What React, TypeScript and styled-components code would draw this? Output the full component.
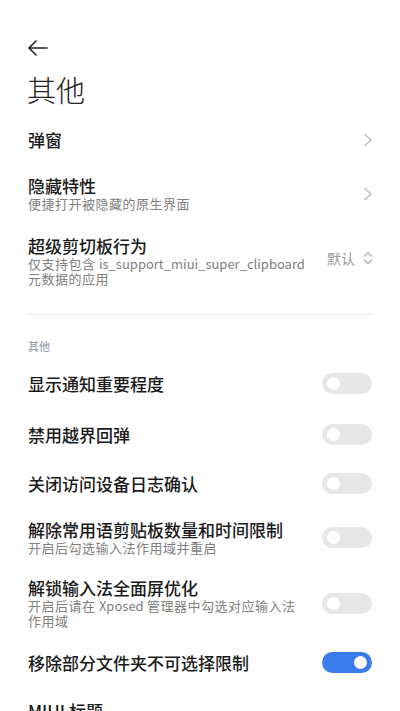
import React from "react";
import styled, { createGlobalStyle } from "styled-components";

const Global = createGlobalStyle`
  html, body { margin: 0; padding: 0; background: #fff; }
  body { font-family: "Noto Sans CJK SC", "Noto Sans", sans-serif; -webkit-font-smoothing: antialiased; }
  * { box-sizing: border-box; }
`;

const Page = styled.div`
  width: 400px;
  height: 711px;
  overflow: hidden;
  background: #fff;
  padding: 0 28px;
`;

const TopBar = styled.div`
  height: 62px;
  padding-top: 37px;
  display: flex;
  align-items: flex-start;
`;

const BackButton = styled.div`
  width: 22px;
  height: 22px;
  margin-left: -1px;
  display: flex;
  align-items: center;
`;

const Title = styled.h1`
  margin: 10px 0 0 -1px;
  font-size: 29px;
  line-height: 34px;
  font-weight: 300;
  color: #222;
`;

const List = styled.div<{ $mt: number }>`
  display: flex;
  flex-direction: column;
  margin-top: ${(p) => p.$mt}px;
`;

const Row = styled.div<{ $pt: number; $pb: number }>`
  display: flex;
  align-items: center;
  gap: 12px;
  flex-shrink: 0;
  padding-top: ${(p) => p.$pt}px;
  padding-bottom: ${(p) => p.$pb}px;
`;

const Texts = styled.div`
  flex: 1;
  min-width: 0;
  display: flex;
  flex-direction: column;
`;

const RowTitle = styled.div`
  font-size: 17px;
  line-height: 20px;
  font-weight: 500;
  color: #1a1a1a;
  white-space: nowrap;
`;

const RowSub = styled.div`
  font-size: 13px;
  line-height: 15px;
  color: #808080;
  letter-spacing: 0.5px;
  white-space: nowrap;
`;

const Latin = styled.span`
  letter-spacing: 0;
`;

const Value = styled.div`
  display: flex;
  align-items: center;
  gap: 8px;
  font-size: 14px;
  line-height: 18px;
  color: #9a9a9a;
  margin-right: -1px;
  margin-bottom: 6px;
`;

const Divider = styled.div`
  height: 1px;
  background: #ececec;
  margin-top: 15px;
`;

const Section = styled.div`
  margin-top: 24px;
  margin-bottom: 5px;
  font-size: 11px;
  line-height: 14px;
  color: #8a8fa6;
`;

const Track = styled.div<{ $on: boolean }>`
  width: 50px;
  height: 21px;
  border-radius: 11px;
  background: ${(p) => (p.$on ? "#3a7cec" : "#e7e7e7")};
  display: flex;
  align-items: center;
  justify-content: ${(p) => (p.$on ? "flex-end" : "flex-start")};
  padding: 0 5px;
  flex-shrink: 0;
`;

const Knob = styled.div`
  width: 13px;
  height: 13px;
  border-radius: 50%;
  background: #fff;
`;

const Chevron = () => (
  <svg width="10" height="16" viewBox="0 0 10 16" style={{ flexShrink: 0, marginRight: -1 }}>
    <path d="M2 2.5 L8 8 L2 13.5" fill="none" stroke="#b8b8b8" strokeWidth="1.3" strokeLinecap="round" strokeLinejoin="round" />
  </svg>
);

const UpDown = () => (
  <svg width="10" height="16" viewBox="0 0 10 16">
    <path d="M1.5 6 L5 2.5 L8.5 6 M1.5 10 L5 13.5 L8.5 10" fill="none" stroke="#b0b0b0" strokeWidth="1.2" strokeLinecap="round" strokeLinejoin="round" />
  </svg>
);

const Toggle = ({ on }: { on: boolean }) => (
  <Track $on={on}>
    <Knob />
  </Track>
);

type Item = { title: string; sub?: React.ReactNode; on?: boolean; pt: number; pb: number };

const toggles: Item[] = [
  { title: "显示通知重要程度", on: false, pt: 15, pb: 15 },
  { title: "禁用越界回弹", on: false, pt: 15, pb: 14 },
  { title: "关闭访问设备日志确认", on: false, pt: 14, pb: 14 },
  { title: "解除常用语剪贴板数量和时间限制", sub: "开启后勾选输入法作用域并重启", on: false, pt: 12, pb: 12 },
  {
    title: "解锁输入法全面屏优化",
    sub: (
      <>
        开启后请在 <Latin>Xposed</Latin> 管理器中勾选对应输入法
        <br />
        作用域
      </>
    ),
    on: false,
    pt: 11,
    pb: 12,
  },
  { title: "移除部分文件夹不可选择限制", on: true, pt: 12, pb: 15 },
  { title: "MIUI 标题", pt: 13, pb: 15 },
];

export default function App() {
  return (
    <Page>
      <Global />
      <TopBar>
        <BackButton>
          <svg width="22" height="22" viewBox="0 0 22 22">
            <path d="M2 11 H20 M9 4 L2 11 L9 18" fill="none" stroke="#222" strokeWidth="1.6" strokeLinecap="round" strokeLinejoin="round" />
          </svg>
        </BackButton>
      </TopBar>
      <Title>其他</Title>
      <List $mt={11}>
        <Row $pt={13} $pb={13}>
          <Texts>
            <RowTitle>弹窗</RowTitle>
          </Texts>
          <Chevron />
        </Row>
        <Row $pt={13} $pb={12}>
          <Texts>
            <RowTitle>隐藏特性</RowTitle>
            <RowSub>便捷打开被隐藏的原生界面</RowSub>
          </Texts>
          <Chevron />
        </Row>
        <Row $pt={13} $pb={13}>
          <Texts>
            <RowTitle>超级剪切板行为</RowTitle>
            <RowSub>
              仅支持包含 <Latin>is_support_miui_super_clipboard</Latin>
              <br />
              元数据的应用
            </RowSub>
          </Texts>
          <Value>
            默认
            <UpDown />
          </Value>
        </Row>
      </List>
      <Divider />
      <Section>其他</Section>
      <List $mt={0}>
        {toggles.map((t) => (
          <Row key={t.title} $pt={t.pt} $pb={t.pb}>
            <Texts>
              <RowTitle>{t.title}</RowTitle>
              {t.sub && <RowSub>{t.sub}</RowSub>}
            </Texts>
            {t.on !== undefined && <Toggle on={t.on} />}
          </Row>
        ))}
      </List>
    </Page>
  );
}
